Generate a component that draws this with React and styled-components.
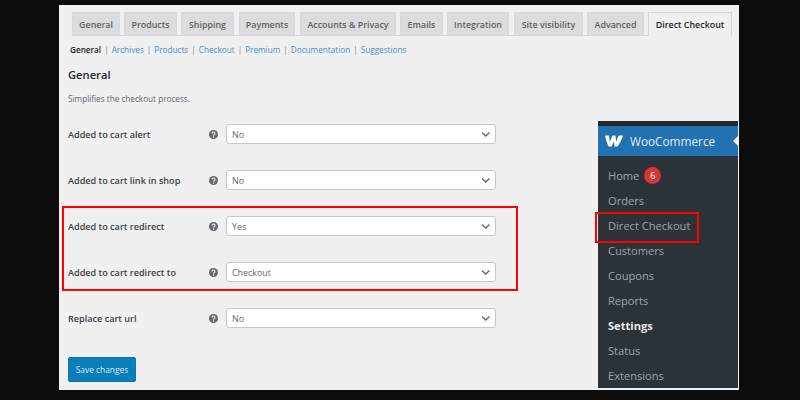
import React from 'react';
import styled, { createGlobalStyle } from 'styled-components';

const Global = createGlobalStyle`
  html, body { margin: 0; padding: 0; background: #0c0c0c; }
  body { width: 800px; height: 400px; overflow: hidden; font-family: "Open Sans", "Noto Sans", sans-serif; }
`;

const Stage = styled.div`
  width: 800px;
  height: 400px;
  padding: 5px 61px 10px 59px;
  box-sizing: border-box;
`;

const Panel = styled.main`
  position: relative;
  height: 385px;
  background: #f0f0f1;
  padding: 7px 7px 0 13px;
  box-sizing: border-box;
`;

const TabBar = styled.nav`
  display: flex;
  height: 24px;
  border-bottom: 1px solid #d5d7da;
  box-sizing: border-box;
`;

const Tab = styled.div`
  width: ${p => p.$w}px;
  margin-right: ${p => p.$gap}px;
  height: ${p => (p.$active ? 24 : 23)}px;
  box-sizing: border-box;
  display: flex;
  align-items: center;
  justify-content: center;
  font-size: 8.9px;
  font-weight: 600;
  white-space: nowrap;
  color: ${p => (p.$active ? '#1d2327' : '#5b6167')};
  background: ${p => (p.$active ? '#f0f0f1' : '#dcdcde')};
  border: 1px solid ${p => (p.$active ? '#d5d7da' : '#d8d8da')};
  border-bottom: none;
`;

const SubNav = styled.div`
  display: flex;
  align-items: center;
  height: 12px;
  margin: 7px 0 0 -2px;
  font-size: 8.2px;
  white-space: nowrap;
`;

const SubLink = styled.span`
  color: ${p => (p.$active ? '#1d2327' : '#4a8fc2')};
  font-weight: ${p => (p.$active ? 600 : 400)};
`;

const Sep = styled.span`
  color: #7d858c;
  margin: 0 3px;
`;

const Title = styled.h2`
  margin: 13px 0 0 -4px;
  font-size: 11.2px;
  line-height: 14px;
  font-weight: 600;
  color: #23282d;
`;

const Desc = styled.p`
  margin: 11px 0 0 -4px;
  font-size: 8.2px;
  line-height: 12px;
  color: #5f666c;
`;

const Rows = styled.div`
  display: flex;
  flex-direction: column;
  gap: 26px;
  margin: 19px 0 0 -4px;
`;

const Row = styled.div`
  display: flex;
  align-items: center;
  height: 20px;
`;

const Label = styled.label`
  width: 141px;
  font-size: 9.1px;
  font-weight: 600;
  color: #3a4045;
  white-space: nowrap;
`;

const Help = styled.svg`
  width: 9px;
  height: 9px;
  margin-right: 8px;
  flex: none;
`;

const Select = styled.div`
  width: 270px;
  height: 20px;
  box-sizing: border-box;
  display: flex;
  align-items: center;
  justify-content: space-between;
  padding: 0 5px;
  background: #fff;
  border: 1px solid #c5c7c9;
  border-radius: 3px;
  font-size: 8.9px;
  color: #5f666c;
`;

const Chevron = styled.svg`
  width: 10px;
  height: 10px;
`;

const Save = styled.button`
  display: block;
  margin: 29px 0 0 -4px;
  width: 68px;
  height: 25px;
  padding: 0;
  border: 1px solid #0a76b0;
  border-radius: 2px;
  background: #087fbb;
  color: #d5e8f3;
  font-family: inherit;
  font-size: 8.4px;
  font-weight: 400;
`;

const Side = styled.aside`
  position: absolute;
  left: 539px;
  top: 116px;
  width: 140px;
  height: 267px;
  box-sizing: border-box;
  background: #2c3338;
  border-top: 5px solid #23282d;
`;

const SideHead = styled.div`
  position: relative;
  display: flex;
  align-items: center;
  height: 30px;
  background: #2271b1;
  padding-left: 7px;
  color: #e6eff6;
  font-size: 11.8px;
`;

const Logo = styled.svg`
  width: 18px;
  height: 12px;
  margin-right: 7px;
`;

const Notch = styled.span`
  position: absolute;
  right: -1px;
  top: 9px;
  width: 0;
  height: 0;
  border: 6px solid transparent;
  border-right-color: #f0f0f1;
  border-left-width: 0;
`;

const SideList = styled.ul`
  list-style: none;
  margin: 7px 0 0;
  padding: 0 0 0 10px;
`;

const SideItem = styled.li`
  display: flex;
  align-items: center;
  height: 25px;
  font-size: 11.1px;
  font-weight: ${p => (p.$active ? 700 : 400)};
  color: ${p => (p.$active ? '#e9eaeb' : '#a0a4a7')};
`;

const Badge = styled.span`
  display: flex;
  align-items: center;
  justify-content: center;
  width: 17px;
  height: 17px;
  margin-left: 5px;
  border-radius: 50%;
  background: #d63638;
  color: #fff;
  font-size: 9px;
`;

const Highlight = styled.div`
  position: absolute;
  left: ${p => p.$x}px;
  top: ${p => p.$y}px;
  width: ${p => p.$w}px;
  height: ${p => p.$h}px;
  box-sizing: border-box;
  border: 2px solid #ff0000;
`;

const tabs = [
  ['General', 48, 4], ['Products', 53, 4], ['Shipping', 53, 5], ['Payments', 56, 5],
  ['Accounts & Privacy', 96, 4], ['Emails', 43, 4], ['Integration', 62, 5],
  ['Site visibility', 69, 4], ['Advanced', 57, 4], ['Direct Checkout', 84, 0],
];
const links = ['General', 'Archives', 'Products', 'Checkout', 'Premium', 'Documentation', 'Suggestions'];
const rows = [
  ['Added to cart alert', 'No'],
  ['Added to cart link in shop', 'No'],
  ['Added to cart redirect', 'Yes'],
  ['Added to cart redirect to', 'Checkout'],
  ['Replace cart url', 'No'],
];
const menu = ['Home', 'Orders', 'Direct Checkout', 'Customers', 'Coupons', 'Reports', 'Settings', 'Status', 'Extensions'];

const HelpIcon = () => (
  <Help viewBox="0 0 18 18">
    <circle cx="9" cy="9" r="9" fill="#646970" />
    <path d="M6 7a3 2.8 0 1 1 4.6 2.3C9.6 10 9 10.3 9 11.4" fill="none" stroke="#f0f0f1" strokeWidth="2.2" />
    <circle cx="9" cy="14" r="1.4" fill="#f0f0f1" />
  </Help>
);

export default function App() {
  return (
    <Stage>
      <Global />
      <Panel>
        <TabBar>
          {tabs.map(([t, w, g]) => (
            <Tab key={t} $w={w} $gap={g} $active={t === 'Direct Checkout'}>{t}</Tab>
          ))}
        </TabBar>
        <SubNav>
          {links.map((l, i) => (
            <React.Fragment key={l}>
              {i > 0 && <Sep>|</Sep>}
              <SubLink $active={i === 0}>{l}</SubLink>
            </React.Fragment>
          ))}
        </SubNav>
        <Title>General</Title>
        <Desc>Simplifies the checkout process.</Desc>
        <Rows>
          {rows.map(([l, v]) => (
            <Row key={l}>
              <Label>{l}</Label>
              <HelpIcon />
              <Select>
                {v}
                <Chevron viewBox="0 0 10 10">
                  <path d="M2 3.5l3.75 3.5 3.75-3.5" fill="none" stroke="#5f666c" strokeWidth="1.3" />
                </Chevron>
              </Select>
            </Row>
          ))}
        </Rows>
        <Save>Save changes</Save>
        <Side>
          <SideHead>
            <Logo viewBox="0 0 18 12">
              <path d="M0 0.5h4l0.7 6.2L7.6 0.5h2.8l0.8 6.2L13.6 0.5H18c-1.2 4-3.2 8-5.4 11h-3L9 6.6 6.6 11.5h-3C2 8 0.7 4 0 0.5z" fill="#fff" />
            </Logo>
            WooCommerce
            <Notch />
          </SideHead>
          <SideList>
            {menu.map(m => (
              <SideItem key={m} $active={m === 'Settings'}>
                {m}
                {m === 'Home' && <Badge>6</Badge>}
              </SideItem>
            ))}
          </SideList>
        </Side>
        <Highlight $x={3} $y={201} $w={456} $h={85} />
        <Highlight $x={536} $y={207} $w={104} $h={31} />
      </Panel>
    </Stage>
  );
}
